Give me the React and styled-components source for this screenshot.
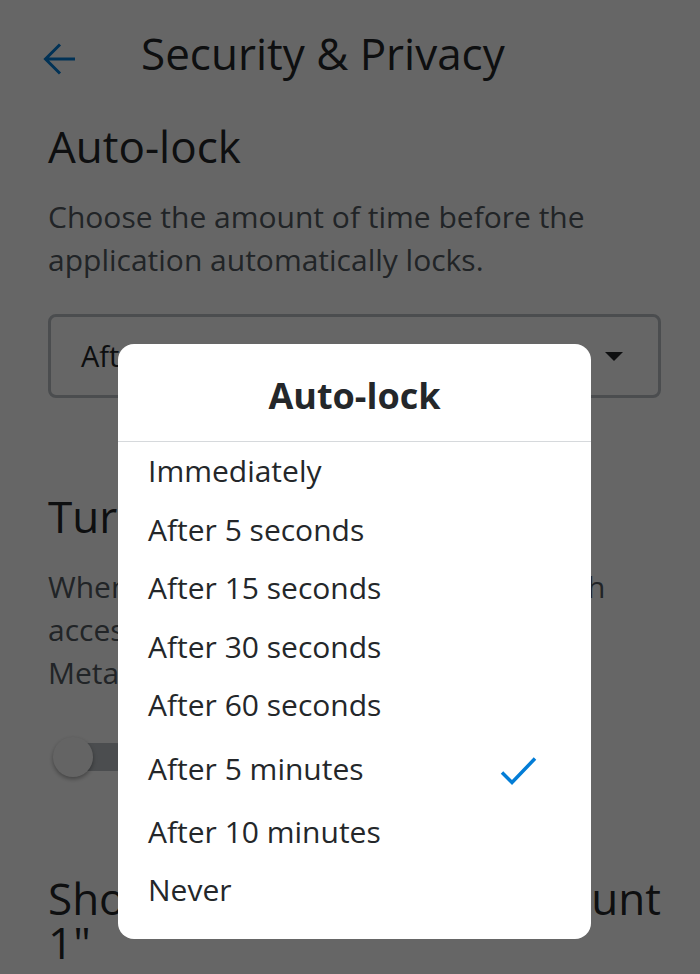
import React from "react";
import styled, { createGlobalStyle } from "styled-components";

const OPTIONS = [
  "Immediately",
  "After 5 seconds",
  "After 15 seconds",
  "After 30 seconds",
  "After 60 seconds",
  "After 5 minutes",
  "After 10 minutes",
  "Never",
];
const SELECTED = "After 5 minutes";

const App = () => {
  return (
    <Page>
      <GlobalStyle />
      <Header>
        <BackArrow width="32" height="32" viewBox="0 0 32 32">
          <path d="M32 16H2.5M17 1.5L2.5 16L17 30.5" />
        </BackArrow>
        <HeaderTitle>Security &amp; Privacy</HeaderTitle>
      </Header>
      <Content>
        <SectionTitle $gap={18}>Auto-lock</SectionTitle>
        <Description>
          Choose the amount of time before the application automatically locks.
        </Description>
        <Select>
          <SelectValue>{SELECTED}</SelectValue>
          <Caret />
        </Select>

        <SectionTitle $gap={96}>Turn on Remember me</SectionTitle>
        <Description>
          When Remember me is on, anyone with
          <br />
          access to your phone can access your
          <br />
          MetaMask account.
        </Description>
        <Toggle>
          <Track />
          <Knob />
        </Toggle>

        <SectionTitle $gap={99}>
          Show private key for "Account
          <br />
          1"
        </SectionTitle>
      </Content>

      <Overlay>
        <Modal>
          <ModalTitle>Auto-lock</ModalTitle>
          <OptionList>
            {OPTIONS.map((option) => (
              <OptionRow key={option} $checked={option === SELECTED}>
                <span>{option}</span>
                {option === SELECTED && (
                  <Check width="38" height="32" viewBox="0 0 38 32">
                    <polyline points="3,19.5 13,29.5 36,5.5" />
                  </Check>
                )}
              </OptionRow>
            ))}
          </OptionList>
        </Modal>
      </Overlay>
    </Page>
  );
};

const GlobalStyle = createGlobalStyle`
  * {
    box-sizing: border-box;
  }
  html, body {
    margin: 0;
    padding: 0;
    background: #ffffff;
  }
  body {
    font-family: "Open Sans", "Noto Sans", sans-serif;
    color: #24272a;
  }
`;

const Page = styled.div`
  position: relative;
  width: 700px;
  height: 974px;
  overflow: hidden;
  background: #ffffff;
`;

const Header = styled.div`
  display: flex;
  align-items: center;
  height: 106px;
  padding-left: 43px;
`;

const BackArrow = styled.svg`
  margin-top: 12px;
  fill: none;
  stroke: #037dd6;
  stroke-width: 3;
`;

const HeaderTitle = styled.div`
  margin-left: 66px;
  font-size: 44px;
  line-height: 52px;
  font-weight: 400;
  color: #24272a;
`;

const Content = styled.div`
  display: flex;
  flex-direction: column;
  padding: 0 39px 0 48px;
`;

const SectionTitle = styled.div`
  margin-top: ${({ $gap }) => $gap}px;
  font-size: 44px;
  line-height: 44px;
  font-weight: 400;
  color: #24272a;
  white-space: nowrap;
`;

const Description = styled.div`
  margin-top: 27px;
  font-size: 30px;
  line-height: 43px;
  color: #535a61;
`;

const Select = styled.div`
  display: flex;
  align-items: center;
  justify-content: space-between;
  height: 84px;
  margin-top: 33px;
  padding: 0 35px 0 30px;
  border: 3px solid #bbc0c5;
  border-radius: 8px;
`;

const SelectValue = styled.span`
  font-size: 29px;
  line-height: 40px;
  color: #24272a;
`;

const Caret = styled.span`
  width: 0;
  height: 0;
  border-left: 9px solid transparent;
  border-right: 9px solid transparent;
  border-top: 9px solid #24272a;
`;

const Toggle = styled.div`
  position: relative;
  display: flex;
  align-items: center;
  width: 80px;
  height: 40px;
  margin-top: 43px;
  margin-left: 5px;
`;

const Track = styled.div`
  width: 72px;
  height: 28px;
  margin-left: 5px;
  border-radius: 14px;
  background: #bbc0c5;
`;

const Knob = styled.div`
  position: absolute;
  left: 0;
  top: 0;
  width: 40px;
  height: 40px;
  border-radius: 50%;
  background: #fafafa;
  box-shadow: 0 2px 4px rgba(0, 0, 0, 0.35);
`;

const Overlay = styled.div`
  position: absolute;
  inset: 0;
  padding: 344px 0 0 118px;
  background: rgba(0, 0, 0, 0.6);
`;

const Modal = styled.div`
  width: 473px;
  background: #ffffff;
  border-radius: 16px;
  overflow: hidden;
`;

const ModalTitle = styled.div`
  padding: 30px 0 23px;
  border-bottom: 1px solid #d6d9dc;
  text-align: center;
  font-size: 36px;
  line-height: 44px;
  font-weight: 700;
  color: #24272a;
`;

const OptionList = styled.div`
  display: flex;
  flex-direction: column;
  padding-bottom: 19.5px;
`;

const OptionRow = styled.div`
  display: flex;
  align-items: center;
  justify-content: space-between;
  height: ${({ $checked }) => ($checked ? 68 : 58.5)}px;
  padding: 0 54px 0 30px;
  font-size: 30px;
  line-height: 1;
  color: #24272a;
`;

const Check = styled.svg`
  fill: none;
  stroke: #037dd6;
  stroke-width: 3.5;
`;

export default App;
